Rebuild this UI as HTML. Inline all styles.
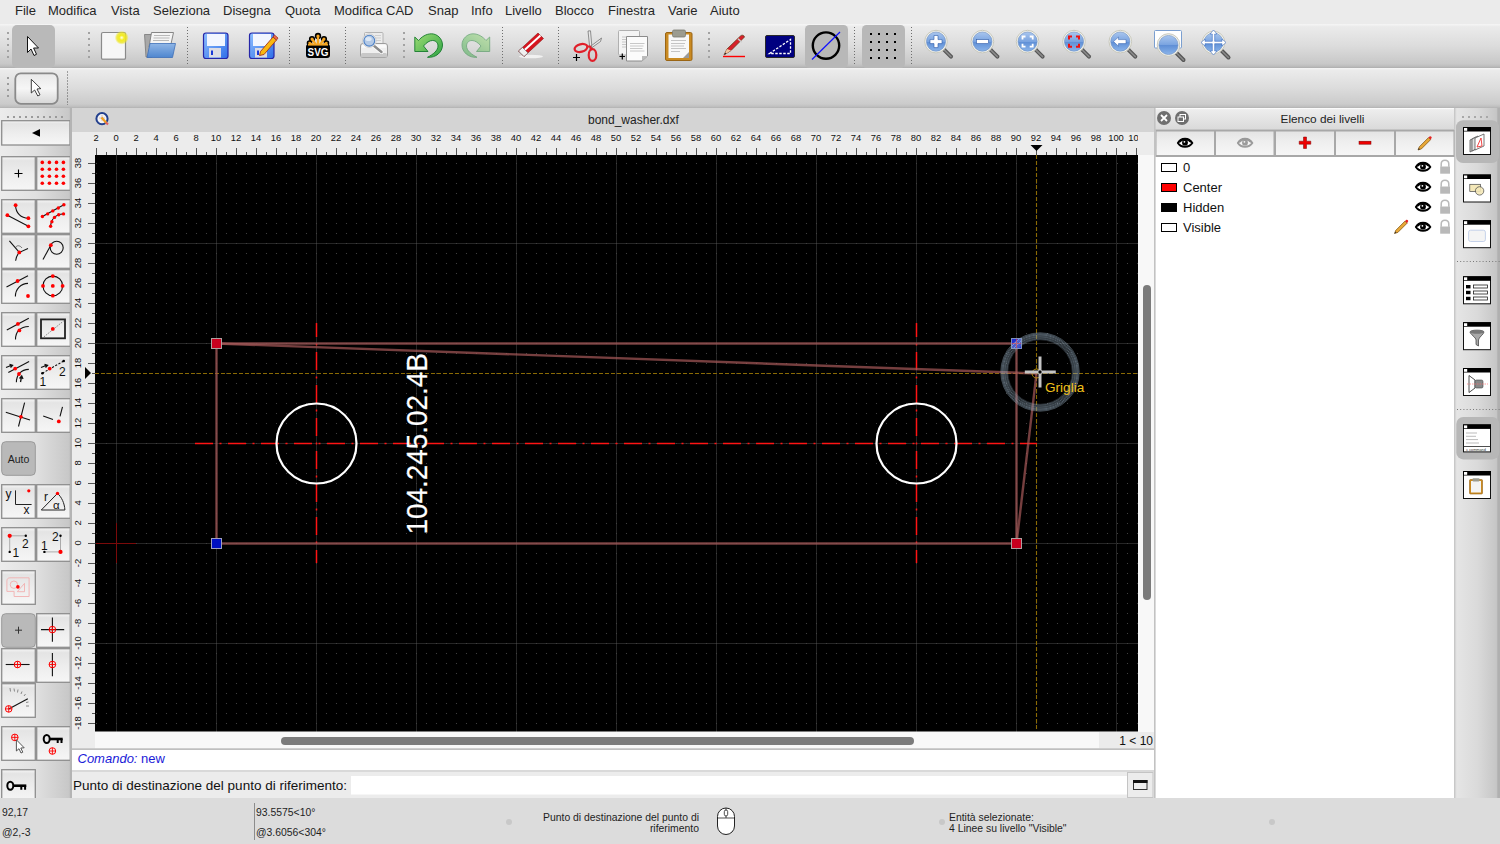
<!DOCTYPE html>
<html><head><meta charset="utf-8">
<style>
*{box-sizing:border-box;margin:0;padding:0}
html,body{width:1500px;height:844px;overflow:hidden;background:#ececec;font-family:"Liberation Sans",sans-serif;color:#1e1e1e;position:relative}
.a{position:absolute}
.menu{position:absolute;left:0;top:0;width:1500px;height:24px;background:#ebebeb;font-size:13px}
.menu span{position:absolute;top:3px;white-space:pre;color:#262626}
.tb1{position:absolute;left:0;top:24px;width:1500px;height:44px;background:linear-gradient(#f6f6f6,#ebebeb 6%,#dcdcdc 50%,#c8c8c8 90%,#bdbdbd 96%,#adadad)}
.tb2{position:absolute;left:0;top:68px;width:1500px;height:40px;background:linear-gradient(#f6f6f6,#ebebeb 6%,#dcdcdc 50%,#cbcbcb 90%,#c0c0c0 96%,#b2b2b2)}
.sepd{position:absolute;width:1px;border-left:1px dotted #6a6a6a}
.grip{position:absolute;width:2px}
.grip i{display:block;width:2px;height:2px;background:#9a9a9a;margin-bottom:4px}
.left{position:absolute;left:0;top:108px;width:72px;height:690px;background:linear-gradient(90deg,#ececec,#e0e0e0 50%,#c8c8c8 95%,#b8b8b8)}
.btn{position:absolute;width:35px;height:35px;border:1px solid #8e8e8e;background:linear-gradient(#f4f4f4,#ececec 40%,#e4e4e4);overflow:hidden}
.btn svg{position:absolute;left:0;top:0}
.mdi{position:absolute;left:72px;top:108px;width:1083px;height:690px;background:#ececec}
.mdititle{position:absolute;left:72px;top:108px;width:1083px;height:24px;background:#d4d4d4;font-size:11.5px;text-align:center;line-height:22px;color:#222}
.canvas{position:absolute;left:95px;top:155px;width:1043px;height:576px;background:#000}
.cmd{position:absolute;left:72px;top:748px;width:1083px;height:50px;background:#e8e8e8}
.status{position:absolute;left:0;top:798px;width:1500px;height:46px;background:#dcdcdc;font-size:10.4px;color:#1e1e1e}
.status span{position:absolute;white-space:pre}
.layers{position:absolute;left:1155px;top:108px;width:300px;height:690px;background:#fff}
.rdock{position:absolute;left:1455px;top:108px;width:45px;height:690px;background:linear-gradient(90deg,#e6e6e6,#dadada 50%,#c6c6c6 92%,#a8a8a8)}
svg text{font-family:"Liberation Sans",sans-serif}
</style></head><body>

<div class="menu">
<span style="left:15px">File</span>
<span style="left:48px">Modifica</span>
<span style="left:111px">Vista</span>
<span style="left:153px">Seleziona</span>
<span style="left:223px">Disegna</span>
<span style="left:285px">Quota</span>
<span style="left:334px">Modifica CAD</span>
<span style="left:428px">Snap</span>
<span style="left:471px">Info</span>
<span style="left:505px">Livello</span>
<span style="left:555px">Blocco</span>
<span style="left:608px">Finestra</span>
<span style="left:668px">Varie</span>
<span style="left:710px">Aiuto</span>
</div>

<div class="tb1"><svg class="a" style="left:0;top:0" width="1500" height="44" viewBox="0 24 1500 44">
<defs>
<linearGradient id="flp" x1="0" y1="0" x2="1" y2="1"><stop offset="0" stop-color="#8fc0ff"/><stop offset="1" stop-color="#2f6ee8"/></linearGradient>
<linearGradient id="lensg" x1="0" y1="0" x2="0" y2="1"><stop offset="0" stop-color="#a9c6ee"/><stop offset="0.5" stop-color="#79a3e0"/><stop offset="0.52" stop-color="#5f8fd6"/><stop offset="1" stop-color="#8ab4ea"/></linearGradient>
<linearGradient id="fold" x1="0" y1="0" x2="0" y2="1"><stop offset="0" stop-color="#8fb6e6"/><stop offset="1" stop-color="#4f86cf"/></linearGradient>
<linearGradient id="undo" x1="0" y1="0" x2="1" y2="1"><stop offset="0" stop-color="#9ddc74"/><stop offset="1" stop-color="#2ea344"/></linearGradient>
<radialGradient id="glow"><stop offset="0" stop-color="#fffff0"/><stop offset="0.35" stop-color="#f4ec20"/><stop offset="0.7" stop-color="#eee620" stop-opacity="0.8"/><stop offset="1" stop-color="#eee620" stop-opacity="0"/></radialGradient>
<g id="lens">
 <path d="M8,8 L15,15" stroke="#555" stroke-width="4" stroke-linecap="round"/>
 <path d="M8,8 L15,15" stroke="#8a8a8a" stroke-width="1.5" stroke-linecap="round"/>
 <circle cx="0" cy="0" r="11.3" fill="#f4f4ee" stroke="#c8c8bc" stroke-width="1"/>
 <circle cx="0" cy="0" r="9.6" fill="url(#lensg)" stroke="#6f8fbf" stroke-width="0.6"/>
</g>
<g id="gripv"><rect x="0" y="0" width="2" height="2"/><rect x="0" y="6" width="2" height="2"/><rect x="0" y="12" width="2" height="2"/><rect x="0" y="18" width="2" height="2"/><rect x="0" y="24" width="2" height="2"/></g>
</defs>
<!-- grips -->
<g fill="#a2a2a2">
<use href="#gripv" x="7" y="32"/><use href="#gripv" x="88" y="32"/><use href="#gripv" x="403" y="32"/><use href="#gripv" x="708" y="32"/>
</g>
<!-- dotted separators -->
<g stroke="#6e6e6e" stroke-width="1" stroke-dasharray="1,2">
<line x1="187.5" y1="27" x2="187.5" y2="66"/><line x1="289.5" y1="27" x2="289.5" y2="66"/><line x1="345.5" y1="27" x2="345.5" y2="66"/>
<line x1="502.5" y1="27" x2="502.5" y2="66"/><line x1="558.5" y1="27" x2="558.5" y2="66"/><line x1="854.5" y1="27" x2="854.5" y2="66"/><line x1="911.5" y1="27" x2="911.5" y2="66"/>
</g>
<!-- selected select button -->
<rect x="12" y="25" width="43" height="43" rx="5" fill="#b9b9b9"/>
<path d="M27.5,36.5 L27.5,52.5 L31,49 L34,55.5 L36.5,54.3 L33.6,48 L38.5,48 Z" fill="#fff" stroke="#111" stroke-width="1" stroke-linejoin="round"/>
<!-- new document -->
<rect x="101.5" y="32.5" width="24" height="27" rx="1.5" fill="#f6f6f6" stroke="#8a8a8a" stroke-width="1.2"/>
<rect x="102" y="58.5" width="23" height="1.5" fill="#9a9a9a"/>
<circle cx="121.7" cy="37.7" r="7" fill="url(#glow)"/>
<!-- open folder -->
<path d="M144.5,34.5 L152,34.5 L152,57 L146,57 Z" fill="#a8a8a8" stroke="#777" stroke-width="0.8"/>
<path d="M151.5,32.5 L173.5,32.5 L171,44 L149,47 Z" fill="#f4f4f4" stroke="#7a7a7a" stroke-width="0.9"/>
<path d="M154,35.5 L170,35.5 M153.5,38 L169.5,38 M153,40.5 L169,40.5" stroke="#b8b8b8" stroke-width="1.2"/>
<path d="M150,43.5 L175.5,43.5 L172.5,57.5 L147,57.5 Z" fill="url(#fold)" stroke="#3d6fb8" stroke-width="0.8"/>
<!-- save -->
<g id="floppy">
<rect x="203.5" y="33" width="24.5" height="25.5" rx="2.5" fill="url(#flp)" stroke="#2626a8" stroke-width="1.2"/>
<rect x="207" y="34" width="18" height="12" fill="#f2f6ff"/>
<rect x="209" y="48" width="12" height="9.5" fill="#dcdce4"/>
<rect x="211" y="50.5" width="2" height="4.5" fill="#1a3ad8"/>
</g>
<use href="#floppy" x="46"/>
<path d="M260.5,51.5 L273,37 L276.5,40 L264,54.5 L259.5,55.5 Z" fill="#f9b811" stroke="#a4341a" stroke-width="0.9" stroke-linejoin="round"/>
<path d="M273,37 L274.5,35 L278,38 L276.5,40 Z" fill="#ec6a50" stroke="#a4341a" stroke-width="0.8"/>
<!-- SVG -->
<g stroke="#000" stroke-width="1.6" fill="#f5a623">
<circle cx="318" cy="36" r="2.4"/><circle cx="312" cy="39" r="2.3"/><circle cx="324" cy="39" r="2.3"/><circle cx="309.5" cy="43" r="2"/><circle cx="326.5" cy="43" r="2"/>
</g>
<path d="M318,36 L318,45 M312,39 L316,45 M324,39 L320,45 M309.5,43 L314,45.5 M326.5,43 L322,45.5" stroke="#f5a623" stroke-width="2.4"/>
<rect x="306" y="44" width="24" height="14" rx="3" fill="#000"/>
<rect x="308" y="44" width="20" height="1.6" fill="#f5a623"/>
<text x="318" y="56" font-size="11" font-weight="bold" fill="#fff" text-anchor="middle" transform="translate(318,0) scale(0.9,1) translate(-318,0)">SVG</text>
<!-- print preview -->
<rect x="364.5" y="32.5" width="18.5" height="13" rx="1" fill="#ececec" stroke="#b4b4b4"/>
<path d="M375,35.5 L381,35.5 M375,38 L381,38 M375,40.5 L381,40.5" stroke="#cfcfcf" stroke-width="1"/>
<rect x="360.5" y="43.5" width="27" height="14" rx="2.5" fill="#efefef" stroke="#9c9c9c" stroke-width="1"/>
<rect x="362" y="44.8" width="24" height="3" fill="#fafafa"/>
<rect x="361" y="53" width="26" height="4.3" rx="1.5" fill="#c8c8c8"/>
<path d="M373,45 L381.5,52" stroke="#fff" stroke-width="4" stroke-linecap="round"/>
<path d="M373,45 L381.5,52" stroke="#8c8c8c" stroke-width="2.4" stroke-linecap="round"/>
<circle cx="369.3" cy="40.7" r="6.8" fill="#f6f6f6" stroke="#c4c4c4" stroke-width="0.8"/>
<circle cx="369.3" cy="40.7" r="5.4" fill="#b3c9e6" stroke="#4b7fc4" stroke-width="1.1"/>
<ellipse cx="368.5" cy="39" rx="3.2" ry="2" fill="#dce8f6"/>
<!-- undo / redo -->
<path d="M414.8,37 L414.8,51.5 L428,51.5 L423.5,46 C426.5,42.5 429.5,40.5 432.5,40.5 C436.5,40.5 438,43.5 438,46 C438,50.5 433,54.5 427.5,57.3 C436,58 442.5,52 442.5,45 C442.5,38.5 437,33.8 431.5,33.8 C426,33.8 421.5,37 418.5,40.5 Z" fill="url(#undo)" stroke="#167a2c" stroke-width="0.9" stroke-linejoin="round"/>
<g opacity="0.5"><path transform="translate(904.5,0) scale(-1,1)" d="M414.8,37 L414.8,51.5 L428,51.5 L423.5,46 C426.5,42.5 429.5,40.5 432.5,40.5 C436.5,40.5 438,43.5 438,46 C438,50.5 433,54.5 427.5,57.3 C436,58 442.5,52 442.5,45 C442.5,38.5 437,33.8 431.5,33.8 C426,33.8 421.5,37 418.5,40.5 Z" fill="url(#undo)" stroke="#167a2c" stroke-width="0.9" stroke-linejoin="round"/></g>
<!-- eraser -->
<ellipse cx="531" cy="56.5" rx="12" ry="1.8" fill="#f4f4f4" opacity="0.9"/>
<path d="M518.5,51 L538,33 L543.5,38.5 L524,56.5 Z" fill="#d8141e" stroke="#8a1010" stroke-width="0.6"/>
<path d="M521,53.3 L540.5,35.5" stroke="#fff" stroke-width="2"/>
<path d="M518.5,51 L522.5,47.5 L528,53 L524,56.5 Z" fill="#f0f0f0" stroke="#666" stroke-width="0.6"/>
<!-- scissors -->
<path d="M590,50 L588,31 L590.5,30.8 L592,48 Z" fill="#e8e8e8" stroke="#666" stroke-width="0.7"/>
<path d="M591,46 L601.5,38 L600.5,41.5 L592,47.5 Z" fill="#e8e8e8" stroke="#666" stroke-width="0.7"/>
<ellipse cx="581" cy="48" rx="6.5" ry="3.8" transform="rotate(-15 581 48)" fill="none" stroke="#e0202a" stroke-width="2.2"/>
<ellipse cx="592.5" cy="55" rx="3.8" ry="5.8" fill="none" stroke="#e0202a" stroke-width="2.2"/>
<path d="M586.5,46.5 L590,46.5 L592,50" stroke="#e0202a" stroke-width="2.2" fill="none"/>
<path d="M573,57.5 L580,57.5 M576.5,54 L576.5,61" stroke="#000" stroke-width="1.2"/>
<!-- copy -->
<rect x="618.5" y="30.5" width="21" height="24.5" rx="1" fill="#f4f4f4" stroke="#b0b0b0"/>
<path d="M626.5,36.5 L647.5,36.5 L647.5,56 L642,61 L626.5,61 Z" fill="#fbfbfb" stroke="#8c8c8c"/>
<path d="M642,61 L642,56 L647.5,56 Z" fill="#bbb"/>
<path d="M630,43.5 L644.5,43.5 M630,46 L643.5,46 M630,48.5 L642.5,48.5 M630,51 L644.5,51 M622,37 L626,37 M622,39.5 L626,39.5 M622,42 L626,42 M622,44.5 L626,44.5 M622,47 L626,47" stroke="#c8c8c8" stroke-width="1"/>
<path d="M619.5,56.5 L625,56.5 M622.3,53.5 L622.3,59.5" stroke="#000" stroke-width="1.2"/>
<!-- paste -->
<rect x="665.5" y="32.5" width="26.5" height="28" rx="1.5" fill="#c98a22" stroke="#9a6514"/>
<rect x="668.5" y="34.5" width="20.5" height="23.5" fill="#f8f8f8"/>
<path d="M671,40.5 L686,40.5 M671,43.5 L685,43.5 M671,46 L684,46 M671,48.5 L686,48.5 M671,51.5 L680,51.5" stroke="#c4c4c4"/>
<path d="M683,58 L689,58 L689,52 Z" fill="#9a9a9a"/>
<rect x="672.5" y="30" width="13" height="7" rx="1.5" fill="#9c9c90" stroke="#7a7a70" stroke-width="0.8"/>
<!-- pencil -->
<path d="M723,56.5 L745,56.5" stroke="#ff0000" stroke-width="1.4"/>
<path d="M724,55 L727,49 L740.5,36 C742,34.5 744,35.2 744.5,37 L731,50.5 Z" fill="#d8202a" stroke="#6a3a1a" stroke-width="0.8" stroke-linejoin="round"/>
<path d="M724,55 L727,49 L731,50.5 Z" fill="#f0c8a0"/>
<path d="M724,55 L725.2,52.5 L726.4,53.4 Z" fill="#222"/>
<path d="M738,38.7 L741.7,42.3" stroke="#ccc" stroke-width="1.5"/>
<!-- dim box -->
<rect x="765.5" y="35.5" width="29" height="22" rx="1.5" fill="#000080" stroke="#2a2a2a" stroke-width="1"/>
<path d="M769.5,53.5 L790.5,39.5 L790.5,53.5 Z" fill="none" stroke="#fff" stroke-width="1.3" stroke-dasharray="2.5,1.5"/>
<!-- selected circle-line -->
<rect x="805" y="25" width="43" height="43" rx="4.5" fill="#b8b8b8"/>
<circle cx="826" cy="45.6" r="13.2" fill="none" stroke="#000" stroke-width="2.4"/>
<path d="M812,59.5 L840,32" stroke="#1010ff" stroke-width="1.2"/>
<!-- selected grid -->
<rect x="862" y="25" width="43" height="43" rx="4.5" fill="#b8b8b8"/>
<g fill="#000">
<rect x="870" y="33" width="2" height="2"/><rect x="878" y="33" width="2" height="2"/><rect x="886" y="33" width="2" height="2"/><rect x="894" y="33" width="2" height="2"/>
<rect x="870" y="41" width="2" height="2"/><rect x="878" y="41" width="2" height="2"/><rect x="886" y="41" width="2" height="2"/><rect x="894" y="41" width="2" height="2"/>
<rect x="870" y="49" width="2" height="2"/><rect x="878" y="49" width="2" height="2"/><rect x="886" y="49" width="2" height="2"/><rect x="894" y="49" width="2" height="2"/>
<rect x="870" y="57" width="2" height="2"/><rect x="878" y="57" width="2" height="2"/><rect x="886" y="57" width="2" height="2"/><rect x="894" y="57" width="2" height="2"/>
</g>
<!-- zoom icons -->
<use href="#lens" x="936" y="41.6"/>
<path d="M934,35.5 L938,35.5 L938,39.6 L942,39.6 L942,43.6 L938,43.6 L938,47.6 L934,47.6 L934,43.6 L930,43.6 L930,39.6 L934,39.6 Z" fill="#fff" stroke="#2d5aa8" stroke-width="0.6"/>
<use href="#lens" x="982.4" y="41.6"/>
<rect x="976.5" y="39.6" width="12" height="4" fill="#fff" stroke="#2d5aa8" stroke-width="0.6"/>
<use href="#lens" x="1027.6" y="41.6"/>
<path d="M1022.5,39.5 L1022.5,36.5 L1025.5,36.5 M1029.7,36.5 L1032.7,36.5 L1032.7,39.5 M1032.7,43.7 L1032.7,46.7 L1029.7,46.7 M1025.5,46.7 L1022.5,46.7 L1022.5,43.7" stroke="#fff" stroke-width="1.8" fill="none"/>
<use href="#lens" x="1074" y="41.6"/>
<path d="M1069,39.5 L1069,36.5 L1072,36.5 M1076,36.5 L1079,36.5 L1079,39.5 M1079,43.7 L1079,46.7 L1076,46.7 M1072,46.7 L1069,46.7 L1069,43.7" stroke="#ee1010" stroke-width="2" fill="none"/>
<use href="#lens" x="1120.3" y="41.6"/>
<path d="M1113.5,41.6 L1118.5,37 L1118.5,39.6 L1126,39.6 L1126,43.6 L1118.5,43.6 L1118.5,46.2 Z" fill="#fff" stroke="#2d5aa8" stroke-width="0.5"/>
<rect x="1154.5" y="30.5" width="27" height="17.5" rx="1" fill="#fff" stroke="#7b9fd0" stroke-width="1"/>
<use href="#lens" x="1168.5" y="45"/>
<use href="#lens" x="1213.5" y="42.5"/>
<path d="M1213.5,30 L1217,34 L1214.7,34 L1214.7,41.3 L1222,41.3 L1222,39 L1226,42.5 L1222,46 L1222,43.7 L1214.7,43.7 L1214.7,51 L1217,51 L1213.5,55 L1210,51 L1212.3,51 L1212.3,43.7 L1205,43.7 L1205,46 L1201,42.5 L1205,39 L1205,41.3 L1212.3,41.3 L1212.3,34 L1210,34 Z" fill="#fff" stroke="#3b6cc0" stroke-width="0.6"/>
</svg>
</div>
<div class="tb2"><svg class="a" style="left:0;top:0" width="1500" height="40" viewBox="0 68 1500 40">
<defs><linearGradient id="b2g" x1="0" y1="0" x2="0" y2="1"><stop offset="0" stop-color="#e8e8e8"/><stop offset="0.5" stop-color="#f6f6f6"/><stop offset="1" stop-color="#d6d6d6"/></linearGradient></defs>
<g fill="#9c9c9c"><rect x="7" y="77" width="2" height="2"/><rect x="7" y="83" width="2" height="2"/><rect x="7" y="89" width="2" height="2"/><rect x="7" y="95" width="2" height="2"/></g>
<rect x="15.3" y="73.3" width="42.4" height="30.5" rx="5.5" fill="url(#b2g)" stroke="#8a8a8a" stroke-width="1.8"/>
<path d="M31.3,79.3 L31.3,93 L34.6,90 L37.8,96 L40,94.8 L37,89 L40.8,88.6 Z" fill="#fff" stroke="#2a2a2a" stroke-width="0.9" stroke-linejoin="round"/>
<line x1="67.5" y1="71.5" x2="67.5" y2="105" stroke="#555" stroke-width="1" stroke-dasharray="1,2"/>
</svg>
</div>

<div class="left"><svg class="a" style="left:0;top:0" width="72" height="690" viewBox="0 108 72 690"><defs>
<linearGradient id="lbg" x1="0" y1="0" x2="0" y2="1"><stop offset="0" stop-color="#f6f6f6"/><stop offset="0.12" stop-color="#e4e4e4"/><stop offset="0.55" stop-color="#eeeeee"/><stop offset="1" stop-color="#f6f6f6"/></linearGradient>
<g id="rc"><circle cx="0" cy="0" r="3.3" fill="none" stroke="#ff0000" stroke-width="1"/><path d="M-3.3,0 L3.3,0 M0,-3.3 L0,3.3" stroke="#ff0000" stroke-width="0.9"/></g>
<g id="key"><ellipse cx="0" cy="0" rx="3" ry="4" fill="none" stroke="#000" stroke-width="2"/><path d="M3,0 L16,0" stroke="#000" stroke-width="2.6"/><path d="M11,0 L11,4 M14.8,0 L14.8,4" stroke="#000" stroke-width="2"/></g>
</defs><rect x="70" y="108" width="2" height="690" fill="#b4b4b4"/><rect x="7" y="116" width="2" height="2" fill="#9a9a9a"/><rect x="13" y="116" width="2" height="2" fill="#9a9a9a"/><rect x="19" y="116" width="2" height="2" fill="#9a9a9a"/><rect x="25" y="116" width="2" height="2" fill="#9a9a9a"/><rect x="31" y="116" width="2" height="2" fill="#9a9a9a"/><rect x="37" y="116" width="2" height="2" fill="#9a9a9a"/><rect x="43" y="116" width="2" height="2" fill="#9a9a9a"/><rect x="49" y="116" width="2" height="2" fill="#9a9a9a"/><rect x="55" y="116" width="2" height="2" fill="#9a9a9a"/><rect x="61" y="116" width="2" height="2" fill="#9a9a9a"/><rect x="1.7" y="120.7" width="68.3" height="24.3" fill="url(#lbg)" stroke="#8e8e8e" stroke-width="1.3"/><path d="M32,132.9 L40,129 L40,136.8 Z" fill="#000"/><rect x="1.7" y="156.7" width="33.6" height="33.6" fill="url(#lbg)" stroke="#8e8e8e" stroke-width="1.3"/><rect x="36.7" y="156.7" width="33.6" height="33.6" fill="url(#lbg)" stroke="#8e8e8e" stroke-width="1.3"/><rect x="1.7" y="199.7" width="33.6" height="33.6" fill="url(#lbg)" stroke="#8e8e8e" stroke-width="1.3"/><rect x="36.7" y="199.7" width="33.6" height="33.6" fill="url(#lbg)" stroke="#8e8e8e" stroke-width="1.3"/><rect x="1.7" y="234.7" width="33.6" height="33.6" fill="url(#lbg)" stroke="#8e8e8e" stroke-width="1.3"/><rect x="36.7" y="234.7" width="33.6" height="33.6" fill="url(#lbg)" stroke="#8e8e8e" stroke-width="1.3"/><rect x="1.7" y="269.7" width="33.6" height="33.6" fill="url(#lbg)" stroke="#8e8e8e" stroke-width="1.3"/><rect x="36.7" y="269.7" width="33.6" height="33.6" fill="url(#lbg)" stroke="#8e8e8e" stroke-width="1.3"/><rect x="1.7" y="312.7" width="33.6" height="33.6" fill="url(#lbg)" stroke="#8e8e8e" stroke-width="1.3"/><rect x="36.7" y="312.7" width="33.6" height="33.6" fill="url(#lbg)" stroke="#8e8e8e" stroke-width="1.3"/><rect x="1.7" y="355.7" width="33.6" height="33.6" fill="url(#lbg)" stroke="#8e8e8e" stroke-width="1.3"/><rect x="36.7" y="355.7" width="33.6" height="33.6" fill="url(#lbg)" stroke="#8e8e8e" stroke-width="1.3"/><rect x="1.7" y="398.7" width="33.6" height="33.6" fill="url(#lbg)" stroke="#8e8e8e" stroke-width="1.3"/><rect x="36.7" y="398.7" width="33.6" height="33.6" fill="url(#lbg)" stroke="#8e8e8e" stroke-width="1.3"/><rect x="1.7" y="441.7" width="33.6" height="33.6" rx="4" fill="#b9b9b9" stroke="#9a9a9a" stroke-width="1"/><rect x="1.7" y="484.7" width="33.6" height="33.6" fill="url(#lbg)" stroke="#8e8e8e" stroke-width="1.3"/><rect x="36.7" y="484.7" width="33.6" height="33.6" fill="url(#lbg)" stroke="#8e8e8e" stroke-width="1.3"/><rect x="1.7" y="527.7" width="33.6" height="33.6" fill="url(#lbg)" stroke="#8e8e8e" stroke-width="1.3"/><rect x="36.7" y="527.7" width="33.6" height="33.6" fill="url(#lbg)" stroke="#8e8e8e" stroke-width="1.3"/><rect x="1.7" y="570.7" width="33.6" height="33.6" fill="url(#lbg)" stroke="#8e8e8e" stroke-width="1.3"/><rect x="1.7" y="613.7" width="33.6" height="33.6" rx="4" fill="#b9b9b9" stroke="#9a9a9a" stroke-width="1"/><rect x="36.7" y="613.7" width="33.6" height="33.6" fill="url(#lbg)" stroke="#8e8e8e" stroke-width="1.3"/><rect x="1.7" y="648.7" width="33.6" height="33.6" fill="url(#lbg)" stroke="#8e8e8e" stroke-width="1.3"/><rect x="36.7" y="648.7" width="33.6" height="33.6" fill="url(#lbg)" stroke="#8e8e8e" stroke-width="1.3"/><rect x="1.7" y="683.7" width="33.6" height="33.6" fill="url(#lbg)" stroke="#8e8e8e" stroke-width="1.3"/><rect x="1.7" y="726.7" width="33.6" height="33.6" fill="url(#lbg)" stroke="#8e8e8e" stroke-width="1.3"/><rect x="36.7" y="726.7" width="33.6" height="33.6" fill="url(#lbg)" stroke="#8e8e8e" stroke-width="1.3"/><rect x="1.7" y="769.7" width="33.6" height="33.6" fill="url(#lbg)" stroke="#8e8e8e" stroke-width="1.3"/><g transform="translate(1,156)"><path d="M13.5,17.5 L21.5,17.5 M17.5,13.5 L17.5,21.5" stroke="#000" stroke-width="1.1"/></g><g transform="translate(36,156)"><circle cx="6.3" cy="6.4" r="1.8" fill="#ff0000"/><circle cx="6.3" cy="13.2" r="1.8" fill="#ff0000"/><circle cx="6.3" cy="20.3" r="1.8" fill="#ff0000"/><circle cx="6.3" cy="27.2" r="1.8" fill="#ff0000"/><circle cx="13.4" cy="6.4" r="1.8" fill="#ff0000"/><circle cx="13.4" cy="13.2" r="1.8" fill="#ff0000"/><circle cx="13.4" cy="20.3" r="1.8" fill="#ff0000"/><circle cx="13.4" cy="27.2" r="1.8" fill="#ff0000"/><circle cx="20.5" cy="6.4" r="1.8" fill="#ff0000"/><circle cx="20.5" cy="13.2" r="1.8" fill="#ff0000"/><circle cx="20.5" cy="20.3" r="1.8" fill="#ff0000"/><circle cx="20.5" cy="27.2" r="1.8" fill="#ff0000"/><circle cx="27.4" cy="6.4" r="1.8" fill="#ff0000"/><circle cx="27.4" cy="13.2" r="1.8" fill="#ff0000"/><circle cx="27.4" cy="20.3" r="1.8" fill="#ff0000"/><circle cx="27.4" cy="27.2" r="1.8" fill="#ff0000"/></g><g transform="translate(1,199)"><path d="M6.4,16.2 L27.4,27.3" stroke="#111" stroke-width="1.1" fill="none"/><path d="M14.6,6.2 C14.6,14 20,19.2 27.4,19.2" stroke="#111" stroke-width="1.1" fill="none"/><circle cx="6.4" cy="16.2" r="1.9" fill="#ff0000"/><circle cx="27.4" cy="27.3" r="1.9" fill="#ff0000"/><circle cx="14.6" cy="6.2" r="1.9" fill="#ff0000"/><circle cx="27.4" cy="19.2" r="1.9" fill="#ff0000"/></g><g transform="translate(36,199)"><path d="M6.4,17.5 L27.9,5.8" stroke="#111" stroke-width="1.1" fill="none"/><path d="M14.6,27.3 C15,21 19,15.5 27.5,14.9" stroke="#111" stroke-width="1.1" fill="none"/><circle cx="6.4" cy="17.5" r="1.7" fill="#ff0000"/><circle cx="11.6" cy="14.9" r="1.7" fill="#ff0000"/><circle cx="16.8" cy="11.9" r="1.7" fill="#ff0000"/><circle cx="22.3" cy="9" r="1.7" fill="#ff0000"/><circle cx="27.9" cy="5.8" r="1.7" fill="#ff0000"/><circle cx="14.6" cy="27.3" r="1.7" fill="#ff0000"/><circle cx="15.9" cy="22.7" r="1.7" fill="#ff0000"/><circle cx="18.5" cy="18.4" r="1.7" fill="#ff0000"/><circle cx="22.7" cy="15.8" r="1.7" fill="#ff0000"/><circle cx="27.5" cy="14.9" r="1.7" fill="#ff0000"/></g><g transform="translate(1,234)"><path d="M8.4,6.9 L18.3,18.4 L27,14.5 M18.3,18.4 C16,21 15,23 14.6,26.8" stroke="#111" stroke-width="1.1" fill="none"/><path d="M14.5,14 C15,11 19,11 21,14" stroke="#333" stroke-width="0.6" fill="none"/><circle cx="18.3" cy="18.4" r="1.9" fill="#ff0000"/></g><g transform="translate(36,234)"><circle cx="20.7" cy="13.8" r="6.5" stroke="#111" stroke-width="1.1" fill="none"/><path d="M7,25.5 L14.8,11.2" stroke="#111" stroke-width="1.1" fill="none"/><circle cx="14.8" cy="11.2" r="1.9" fill="#ff0000"/></g><g transform="translate(1,269)"><path d="M5.5,17.9 L27,6.8" stroke="#111" stroke-width="1.1" fill="none"/><path d="M14.4,27.4 C14.4,20 20,14.4 27,14.4" stroke="#111" stroke-width="1.1" fill="none"/><circle cx="16.6" cy="12" r="1.9" fill="#ff0000"/><circle cx="27" cy="27" r="1.9" fill="#ff0000"/></g><g transform="translate(36,269)"><circle cx="16.8" cy="16.9" r="9.8" stroke="#111" stroke-width="1.1" fill="none"/><circle cx="16.8" cy="16.9" r="1.9" fill="#ff0000"/><circle cx="16.8" cy="7.1" r="1.9" fill="#ff0000"/><circle cx="16.8" cy="26.7" r="1.9" fill="#ff0000"/><circle cx="7" cy="16.9" r="1.9" fill="#ff0000"/><circle cx="26.6" cy="16.9" r="1.9" fill="#ff0000"/></g><g transform="translate(1,312)"><path d="M5.8,18 L27.8,6.3" stroke="#111" stroke-width="1.1" fill="none"/><path d="M14.5,27.5 C14.5,20 19,14.5 27.8,14.5" stroke="#111" stroke-width="1.1" fill="none"/><circle cx="16.9" cy="11.9" r="1.9" fill="#ff0000"/><circle cx="18.4" cy="18.4" r="1.9" fill="#ff0000"/></g><g transform="translate(36,312)"><rect x="5" y="7.4" width="24" height="18.9" stroke="#222" stroke-width="1.8" fill="none"/><path d="M8,24.8 L27.7,8.9" stroke="#555" stroke-width="0.7" stroke-dasharray="1.5,1.2"/><circle cx="16.8" cy="16.9" r="1.9" fill="#ff0000"/></g><g transform="translate(1,355)"><path d="M7.3,17.4 L28.1,6.4" stroke="#111" stroke-width="1.1" fill="none"/><path d="M15.4,27.3 C15.4,20 20,14.4 27.8,14.4" stroke="#111" stroke-width="1.1" fill="none"/><path d="M5,12.5 L10,10.5 M8.5,9.5 L11.5,10.3 L9.5,12.5" stroke="#111" stroke-width="1.3" fill="none"/><path d="M19.5,27 L20.5,22 M18.5,23.5 L20.7,21 L22,24" stroke="#111" stroke-width="1.3" fill="none"/><circle cx="14.2" cy="13.6" r="1.9" fill="#ff0000"/><circle cx="18" cy="19" r="1.9" fill="#ff0000"/></g><g transform="translate(36,355)"><path d="M6.4,18.2 L27.7,6" stroke="#111" stroke-width="1.1" stroke-dasharray="2.2,1.5"/><path d="M5,12.5 L10,10.5 M8.5,9.5 L11.5,10.3 L9.5,12.5" stroke="#111" stroke-width="1.3" fill="none"/><circle cx="27.7" cy="6" r="1.3" fill="#000"/><circle cx="6.4" cy="18.2" r="1.3" fill="#000"/><text x="3.5" y="30.5" font-size="12" fill="#111">1</text><text x="23" y="21" font-size="12" fill="#111">2</text><circle cx="13.7" cy="13.6" r="1.9" fill="#ff0000"/></g><g transform="translate(1,398)"><path d="M4.8,14.3 L29,21.9 M23.6,4.7 L17.5,28.5" stroke="#111" stroke-width="1.1" fill="none"/><circle cx="19.9" cy="18.8" r="1.9" fill="#ff0000"/></g><g transform="translate(36,398)"><path d="M7.2,18 L17,21.4 M26.5,8.8 L24,18.4" stroke="#111" stroke-width="1.1" fill="none"/><circle cx="22.8" cy="23.4" r="1.9" fill="#ff0000"/></g><g transform="translate(1,441)"><text x="17.5" y="21.5" font-size="10.5" fill="#222" text-anchor="middle">Auto</text></g><g transform="translate(1,484)"><path d="M14.5,6.4 L14.5,20.5 L30.6,20.5" stroke="#222" stroke-width="1" fill="none"/><text x="4.5" y="14" font-size="12" fill="#111">y</text><text x="22.5" y="30" font-size="12" fill="#111">x</text><circle cx="27.8" cy="6.8" r="1.6" fill="#ff0000"/></g><g transform="translate(36,484)"><path d="M5.3,26 L21.5,9.4 C25.5,13 28.5,19 28.9,26 Z" stroke="#222" stroke-width="1" fill="none"/><text x="8" y="17" font-size="12" fill="#111">r</text><text x="17" y="24.5" font-size="11.5" fill="#111">α</text><circle cx="21.5" cy="9.4" r="1.7" fill="#ff0000"/></g><g transform="translate(1,527)"><path d="M24.8,8.8 L8.7,8.8 L8.7,24.9" stroke="#999" stroke-width="0.8" fill="none"/><circle cx="24.8" cy="8.8" r="1.2" fill="#000"/><circle cx="8.7" cy="24.9" r="1.2" fill="#000"/><text x="11.5" y="30" font-size="12" fill="#111">1</text><text x="21" y="21" font-size="12" fill="#111">2</text><circle cx="8.7" cy="8.8" r="2.1" fill="#ff0000"/></g><g transform="translate(36,527)"><path d="M24.5,8.8 L24.5,24.9 L8.4,24.9" stroke="#999" stroke-width="0.8" fill="none"/><circle cx="24.5" cy="8.8" r="1.2" fill="#000"/><circle cx="8.4" cy="24.9" r="1.2" fill="#000"/><text x="5" y="22.5" font-size="12" fill="#111">1</text><text x="16" y="14" font-size="12" fill="#111">2</text><circle cx="24.5" cy="24.9" r="2.1" fill="#ff0000"/></g><g transform="translate(1,570)"><path d="M9,7.8 L28.1,7.8 L28.1,26.5 L13.1,26.5 L13.1,21.4 L5.9,21.4 L5.9,11 C5.9,9 7,7.8 9,7.8 Z" stroke="#f2b0b0" stroke-width="0.9" fill="none"/><circle cx="12.9" cy="14.7" r="3.7" stroke="#f2a8a8" stroke-width="0.8" fill="none"/><path d="M16.3,21.7 L23.5,13.4 L23.5,21.7 Z" stroke="#f2a8a8" stroke-width="0.8" fill="none"/><circle cx="16.9" cy="16.9" r="1.8" fill="#ff0000"/></g><g transform="translate(1,613)"><path d="M14,17.2 L21,17.2 M17.5,13.7 L17.5,20.7" stroke="#333" stroke-width="1"/></g><g transform="translate(36,613)"><path d="M5,16.6 L28.2,16.6 M16.4,4.6 L16.4,28.7" stroke="#111" stroke-width="1.1"/><use href="#rc" x="16.4" y="16.6"/></g><g transform="translate(1,648)"><path d="M4.7,16.5 L28.6,16.5" stroke="#111" stroke-width="1.1"/><use href="#rc" x="16.5" y="16.5"/></g><g transform="translate(36,648)"><path d="M16.4,5.1 L16.4,28.3" stroke="#111" stroke-width="1.1"/><use href="#rc" x="16.4" y="16.5"/></g><g transform="translate(1,683)"><path d="M7.7,25.9 L26.8,15.7" stroke="#111" stroke-width="1.1"/><g stroke="#888" stroke-width="1"><path d="M9,5 L9.5,8.5 M13,5.5 L13.5,8.5 M17,6.5 L16.5,9.5 M21,8.5 L20,11 M24.5,11 L23,13 M27.5,19 L25,19.5 M28,23 L25,23"/></g><use href="#rc" x="7.7" y="25.9"/></g><g transform="translate(1,726)"><use href="#rc" x="13.8" y="11.4"/><path d="M15.4,13.8 L15.4,25 L18,22.7 L20,27 L21.8,26.2 L19.8,22 L23.2,21.8 Z" fill="#fff" stroke="#444" stroke-width="0.9" stroke-linejoin="round"/></g><g transform="translate(36,726)"><use href="#key" x="10.7" y="13"/><use href="#rc" x="16.4" y="25"/></g><g transform="translate(1,769)"><use href="#key" x="9.3" y="16.7"/></g></svg></div>

<div class="mdi"></div>
<div class="mdititle"><span class="a" style="left:516px;top:1px;width:90px;text-align:center;font-size:12px">bond_washer.dxf</span></div>
<svg class="a" style="left:0;top:0" width="1500" height="844" viewBox="0 0 1500 844">
  <rect x="72" y="132" width="1083" height="23" fill="#ececec"/>
  <rect x="72" y="155" width="23" height="576" fill="#ececec"/>
  <rect x="70" y="108" width="2" height="690" fill="#b4b4b4"/>
  <g stroke="#555" stroke-width="1"><line x1="96.5" y1="148" x2="96.5" y2="155"/><line x1="106.5" y1="152" x2="106.5" y2="155"/><line x1="116.5" y1="148" x2="116.5" y2="155"/><line x1="126.5" y1="152" x2="126.5" y2="155"/><line x1="136.5" y1="148" x2="136.5" y2="155"/><line x1="146.5" y1="152" x2="146.5" y2="155"/><line x1="156.5" y1="148" x2="156.5" y2="155"/><line x1="166.5" y1="152" x2="166.5" y2="155"/><line x1="176.5" y1="148" x2="176.5" y2="155"/><line x1="186.5" y1="152" x2="186.5" y2="155"/><line x1="196.5" y1="148" x2="196.5" y2="155"/><line x1="206.5" y1="152" x2="206.5" y2="155"/><line x1="216.5" y1="148" x2="216.5" y2="155"/><line x1="226.5" y1="152" x2="226.5" y2="155"/><line x1="236.5" y1="148" x2="236.5" y2="155"/><line x1="246.5" y1="152" x2="246.5" y2="155"/><line x1="256.5" y1="148" x2="256.5" y2="155"/><line x1="266.5" y1="152" x2="266.5" y2="155"/><line x1="276.5" y1="148" x2="276.5" y2="155"/><line x1="286.5" y1="152" x2="286.5" y2="155"/><line x1="296.5" y1="148" x2="296.5" y2="155"/><line x1="306.5" y1="152" x2="306.5" y2="155"/><line x1="316.5" y1="148" x2="316.5" y2="155"/><line x1="326.5" y1="152" x2="326.5" y2="155"/><line x1="336.5" y1="148" x2="336.5" y2="155"/><line x1="346.5" y1="152" x2="346.5" y2="155"/><line x1="356.5" y1="148" x2="356.5" y2="155"/><line x1="366.5" y1="152" x2="366.5" y2="155"/><line x1="376.5" y1="148" x2="376.5" y2="155"/><line x1="386.5" y1="152" x2="386.5" y2="155"/><line x1="396.5" y1="148" x2="396.5" y2="155"/><line x1="406.5" y1="152" x2="406.5" y2="155"/><line x1="416.5" y1="148" x2="416.5" y2="155"/><line x1="426.5" y1="152" x2="426.5" y2="155"/><line x1="436.5" y1="148" x2="436.5" y2="155"/><line x1="446.5" y1="152" x2="446.5" y2="155"/><line x1="456.5" y1="148" x2="456.5" y2="155"/><line x1="466.5" y1="152" x2="466.5" y2="155"/><line x1="476.5" y1="148" x2="476.5" y2="155"/><line x1="486.5" y1="152" x2="486.5" y2="155"/><line x1="496.5" y1="148" x2="496.5" y2="155"/><line x1="506.5" y1="152" x2="506.5" y2="155"/><line x1="516.5" y1="148" x2="516.5" y2="155"/><line x1="526.5" y1="152" x2="526.5" y2="155"/><line x1="536.5" y1="148" x2="536.5" y2="155"/><line x1="546.5" y1="152" x2="546.5" y2="155"/><line x1="556.5" y1="148" x2="556.5" y2="155"/><line x1="566.5" y1="152" x2="566.5" y2="155"/><line x1="576.5" y1="148" x2="576.5" y2="155"/><line x1="586.5" y1="152" x2="586.5" y2="155"/><line x1="596.5" y1="148" x2="596.5" y2="155"/><line x1="606.5" y1="152" x2="606.5" y2="155"/><line x1="616.5" y1="148" x2="616.5" y2="155"/><line x1="626.5" y1="152" x2="626.5" y2="155"/><line x1="636.5" y1="148" x2="636.5" y2="155"/><line x1="646.5" y1="152" x2="646.5" y2="155"/><line x1="656.5" y1="148" x2="656.5" y2="155"/><line x1="666.5" y1="152" x2="666.5" y2="155"/><line x1="676.5" y1="148" x2="676.5" y2="155"/><line x1="686.5" y1="152" x2="686.5" y2="155"/><line x1="696.5" y1="148" x2="696.5" y2="155"/><line x1="706.5" y1="152" x2="706.5" y2="155"/><line x1="716.5" y1="148" x2="716.5" y2="155"/><line x1="726.5" y1="152" x2="726.5" y2="155"/><line x1="736.5" y1="148" x2="736.5" y2="155"/><line x1="746.5" y1="152" x2="746.5" y2="155"/><line x1="756.5" y1="148" x2="756.5" y2="155"/><line x1="766.5" y1="152" x2="766.5" y2="155"/><line x1="776.5" y1="148" x2="776.5" y2="155"/><line x1="786.5" y1="152" x2="786.5" y2="155"/><line x1="796.5" y1="148" x2="796.5" y2="155"/><line x1="806.5" y1="152" x2="806.5" y2="155"/><line x1="816.5" y1="148" x2="816.5" y2="155"/><line x1="826.5" y1="152" x2="826.5" y2="155"/><line x1="836.5" y1="148" x2="836.5" y2="155"/><line x1="846.5" y1="152" x2="846.5" y2="155"/><line x1="856.5" y1="148" x2="856.5" y2="155"/><line x1="866.5" y1="152" x2="866.5" y2="155"/><line x1="876.5" y1="148" x2="876.5" y2="155"/><line x1="886.5" y1="152" x2="886.5" y2="155"/><line x1="896.5" y1="148" x2="896.5" y2="155"/><line x1="906.5" y1="152" x2="906.5" y2="155"/><line x1="916.5" y1="148" x2="916.5" y2="155"/><line x1="926.5" y1="152" x2="926.5" y2="155"/><line x1="936.5" y1="148" x2="936.5" y2="155"/><line x1="946.5" y1="152" x2="946.5" y2="155"/><line x1="956.5" y1="148" x2="956.5" y2="155"/><line x1="966.5" y1="152" x2="966.5" y2="155"/><line x1="976.5" y1="148" x2="976.5" y2="155"/><line x1="986.5" y1="152" x2="986.5" y2="155"/><line x1="996.5" y1="148" x2="996.5" y2="155"/><line x1="1006.5" y1="152" x2="1006.5" y2="155"/><line x1="1016.5" y1="148" x2="1016.5" y2="155"/><line x1="1026.5" y1="152" x2="1026.5" y2="155"/><line x1="1036.5" y1="148" x2="1036.5" y2="155"/><line x1="1046.5" y1="152" x2="1046.5" y2="155"/><line x1="1056.5" y1="148" x2="1056.5" y2="155"/><line x1="1066.5" y1="152" x2="1066.5" y2="155"/><line x1="1076.5" y1="148" x2="1076.5" y2="155"/><line x1="1086.5" y1="152" x2="1086.5" y2="155"/><line x1="1096.5" y1="148" x2="1096.5" y2="155"/><line x1="1106.5" y1="152" x2="1106.5" y2="155"/><line x1="1116.5" y1="148" x2="1116.5" y2="155"/><line x1="1126.5" y1="152" x2="1126.5" y2="155"/><line x1="1136.5" y1="148" x2="1136.5" y2="155"/><line x1="88" y1="723.5" x2="95" y2="723.5"/><line x1="92" y1="713.5" x2="95" y2="713.5"/><line x1="88" y1="703.5" x2="95" y2="703.5"/><line x1="92" y1="693.5" x2="95" y2="693.5"/><line x1="88" y1="683.5" x2="95" y2="683.5"/><line x1="92" y1="673.5" x2="95" y2="673.5"/><line x1="88" y1="663.5" x2="95" y2="663.5"/><line x1="92" y1="653.5" x2="95" y2="653.5"/><line x1="88" y1="643.5" x2="95" y2="643.5"/><line x1="92" y1="633.5" x2="95" y2="633.5"/><line x1="88" y1="623.5" x2="95" y2="623.5"/><line x1="92" y1="613.5" x2="95" y2="613.5"/><line x1="88" y1="603.5" x2="95" y2="603.5"/><line x1="92" y1="593.5" x2="95" y2="593.5"/><line x1="88" y1="583.5" x2="95" y2="583.5"/><line x1="92" y1="573.5" x2="95" y2="573.5"/><line x1="88" y1="563.5" x2="95" y2="563.5"/><line x1="92" y1="553.5" x2="95" y2="553.5"/><line x1="88" y1="543.5" x2="95" y2="543.5"/><line x1="92" y1="533.5" x2="95" y2="533.5"/><line x1="88" y1="523.5" x2="95" y2="523.5"/><line x1="92" y1="513.5" x2="95" y2="513.5"/><line x1="88" y1="503.5" x2="95" y2="503.5"/><line x1="92" y1="493.5" x2="95" y2="493.5"/><line x1="88" y1="483.5" x2="95" y2="483.5"/><line x1="92" y1="473.5" x2="95" y2="473.5"/><line x1="88" y1="463.5" x2="95" y2="463.5"/><line x1="92" y1="453.5" x2="95" y2="453.5"/><line x1="88" y1="443.5" x2="95" y2="443.5"/><line x1="92" y1="433.5" x2="95" y2="433.5"/><line x1="88" y1="423.5" x2="95" y2="423.5"/><line x1="92" y1="413.5" x2="95" y2="413.5"/><line x1="88" y1="403.5" x2="95" y2="403.5"/><line x1="92" y1="393.5" x2="95" y2="393.5"/><line x1="88" y1="383.5" x2="95" y2="383.5"/><line x1="92" y1="373.5" x2="95" y2="373.5"/><line x1="88" y1="363.5" x2="95" y2="363.5"/><line x1="92" y1="353.5" x2="95" y2="353.5"/><line x1="88" y1="343.5" x2="95" y2="343.5"/><line x1="92" y1="333.5" x2="95" y2="333.5"/><line x1="88" y1="323.5" x2="95" y2="323.5"/><line x1="92" y1="313.5" x2="95" y2="313.5"/><line x1="88" y1="303.5" x2="95" y2="303.5"/><line x1="92" y1="293.5" x2="95" y2="293.5"/><line x1="88" y1="283.5" x2="95" y2="283.5"/><line x1="92" y1="273.5" x2="95" y2="273.5"/><line x1="88" y1="263.5" x2="95" y2="263.5"/><line x1="92" y1="253.5" x2="95" y2="253.5"/><line x1="88" y1="243.5" x2="95" y2="243.5"/><line x1="92" y1="233.5" x2="95" y2="233.5"/><line x1="88" y1="223.5" x2="95" y2="223.5"/><line x1="92" y1="213.5" x2="95" y2="213.5"/><line x1="88" y1="203.5" x2="95" y2="203.5"/><line x1="92" y1="193.5" x2="95" y2="193.5"/><line x1="88" y1="183.5" x2="95" y2="183.5"/><line x1="92" y1="173.5" x2="95" y2="173.5"/><line x1="88" y1="163.5" x2="95" y2="163.5"/></g>
  <defs><clipPath id="rhclip"><rect x="72" y="132" width="1066" height="23"/></clipPath></defs>
  <g font-size="9.4" fill="#111" text-anchor="middle" clip-path="url(#rhclip)"><text x="96" y="141">2</text><text x="116" y="141">0</text><text x="136" y="141">2</text><text x="156" y="141">4</text><text x="176" y="141">6</text><text x="196" y="141">8</text><text x="216" y="141">10</text><text x="236" y="141">12</text><text x="256" y="141">14</text><text x="276" y="141">16</text><text x="296" y="141">18</text><text x="316" y="141">20</text><text x="336" y="141">22</text><text x="356" y="141">24</text><text x="376" y="141">26</text><text x="396" y="141">28</text><text x="416" y="141">30</text><text x="436" y="141">32</text><text x="456" y="141">34</text><text x="476" y="141">36</text><text x="496" y="141">38</text><text x="516" y="141">40</text><text x="536" y="141">42</text><text x="556" y="141">44</text><text x="576" y="141">46</text><text x="596" y="141">48</text><text x="616" y="141">50</text><text x="636" y="141">52</text><text x="656" y="141">54</text><text x="676" y="141">56</text><text x="696" y="141">58</text><text x="716" y="141">60</text><text x="736" y="141">62</text><text x="756" y="141">64</text><text x="776" y="141">66</text><text x="796" y="141">68</text><text x="816" y="141">70</text><text x="836" y="141">72</text><text x="856" y="141">74</text><text x="876" y="141">76</text><text x="896" y="141">78</text><text x="916" y="141">80</text><text x="936" y="141">82</text><text x="956" y="141">84</text><text x="976" y="141">86</text><text x="996" y="141">88</text><text x="1016" y="141">90</text><text x="1036" y="141">92</text><text x="1056" y="141">94</text><text x="1076" y="141">96</text><text x="1096" y="141">98</text><text x="1116" y="141">100</text><text x="1136" y="141">102</text></g>
  <circle cx="102" cy="118.7" r="5.6" fill="#f4f4f4" stroke="#23408e" stroke-width="2"/>
  <path d="M99,118 L105,118 M102,115 L102,121" stroke="#c0a0a0" stroke-width="0.6"/>
  <path d="M101.5,117.5 L106.5,123" stroke="#f0a020" stroke-width="2.2"/>
  <path d="M106,122.5 L108,124.5" stroke="#e06060" stroke-width="2.2"/>
  <g font-size="9.4" fill="#111" text-anchor="middle"><text transform="translate(81,723) rotate(-90)" x="0" y="0">-18</text><text transform="translate(81,703) rotate(-90)" x="0" y="0">-16</text><text transform="translate(81,683) rotate(-90)" x="0" y="0">-14</text><text transform="translate(81,663) rotate(-90)" x="0" y="0">-12</text><text transform="translate(81,643) rotate(-90)" x="0" y="0">-10</text><text transform="translate(81,623) rotate(-90)" x="0" y="0">-8</text><text transform="translate(81,603) rotate(-90)" x="0" y="0">-6</text><text transform="translate(81,583) rotate(-90)" x="0" y="0">-4</text><text transform="translate(81,563) rotate(-90)" x="0" y="0">-2</text><text transform="translate(81,543) rotate(-90)" x="0" y="0">0</text><text transform="translate(81,523) rotate(-90)" x="0" y="0">2</text><text transform="translate(81,503) rotate(-90)" x="0" y="0">4</text><text transform="translate(81,483) rotate(-90)" x="0" y="0">6</text><text transform="translate(81,463) rotate(-90)" x="0" y="0">8</text><text transform="translate(81,443) rotate(-90)" x="0" y="0">10</text><text transform="translate(81,423) rotate(-90)" x="0" y="0">12</text><text transform="translate(81,403) rotate(-90)" x="0" y="0">14</text><text transform="translate(81,383) rotate(-90)" x="0" y="0">16</text><text transform="translate(81,363) rotate(-90)" x="0" y="0">18</text><text transform="translate(81,343) rotate(-90)" x="0" y="0">20</text><text transform="translate(81,323) rotate(-90)" x="0" y="0">22</text><text transform="translate(81,303) rotate(-90)" x="0" y="0">24</text><text transform="translate(81,283) rotate(-90)" x="0" y="0">26</text><text transform="translate(81,263) rotate(-90)" x="0" y="0">28</text><text transform="translate(81,243) rotate(-90)" x="0" y="0">30</text><text transform="translate(81,223) rotate(-90)" x="0" y="0">32</text><text transform="translate(81,203) rotate(-90)" x="0" y="0">34</text><text transform="translate(81,183) rotate(-90)" x="0" y="0">36</text><text transform="translate(81,163) rotate(-90)" x="0" y="0">38</text></g>
</svg>
<svg class="a" style="left:95px;top:155px" width="1043" height="577" viewBox="95 155 1043 577" shape-rendering="crispEdges"><defs><pattern id="dots" x="6" y="3" width="10" height="10" patternUnits="userSpaceOnUse"><rect x="0" y="0" width="1" height="1" fill="#404040"/></pattern></defs><rect x="95" y="155" width="1043" height="577" fill="#000"/><rect x="116" y="155" width="1" height="577" fill="#262626"/><rect x="216" y="155" width="1" height="577" fill="#262626"/><rect x="316" y="155" width="1" height="577" fill="#262626"/><rect x="416" y="155" width="1" height="577" fill="#262626"/><rect x="516" y="155" width="1" height="577" fill="#262626"/><rect x="616" y="155" width="1" height="577" fill="#262626"/><rect x="716" y="155" width="1" height="577" fill="#262626"/><rect x="816" y="155" width="1" height="577" fill="#262626"/><rect x="916" y="155" width="1" height="577" fill="#262626"/><rect x="1016" y="155" width="1" height="577" fill="#262626"/><rect x="1116" y="155" width="1" height="577" fill="#262626"/><rect x="95" y="643" width="1043" height="1" fill="#262626"/><rect x="95" y="543" width="1043" height="1" fill="#262626"/><rect x="95" y="443" width="1043" height="1" fill="#262626"/><rect x="95" y="343" width="1043" height="1" fill="#262626"/><rect x="95" y="243" width="1043" height="1" fill="#262626"/><defs><pattern id="dots2" x="7" y="3" width="10" height="10" patternUnits="userSpaceOnUse"><rect x="0" y="0" width="1" height="1" fill="#404040"/></pattern></defs><rect x="95" y="155" width="946" height="577" fill="url(#dots)"/><rect x="1041" y="155" width="97" height="577" fill="url(#dots2)"/></svg><svg class="a" style="left:95px;top:155px" width="1043" height="577" viewBox="95 155 1043 577"><g stroke="#7a0a0a" stroke-width="1"><line x1="96" y1="543.5" x2="136" y2="543.5"/><line x1="116.5" y1="523" x2="116.5" y2="563"/></g><g stroke="#8a6a04" stroke-width="1.1" stroke-dasharray="4,2"><line x1="95" y1="373.5" x2="1138" y2="373.5"/><line x1="1036.5" y1="155" x2="1036.5" y2="731"/></g><g stroke="#ff1414" stroke-width="1.5" stroke-dasharray="18,6.5,2,6.5"><line x1="195" y1="443.5" x2="1037" y2="443.5"/><line x1="316.5" y1="323" x2="316.5" y2="563" stroke-dashoffset="4"/><line x1="916.5" y1="323" x2="916.5" y2="563" stroke-dashoffset="4"/></g><g fill="none" stroke="#fff" stroke-width="2.2"><circle cx="316.5" cy="443.5" r="40"/><circle cx="916.5" cy="443.5" r="40"/></g><text transform="translate(427.3,534.5) rotate(-90) scale(0.945,1)" font-size="29.5" stroke="#fff" stroke-width="0.2" fill="#fff" font-family="Liberation Sans">104.245.02.4B</text><g stroke="#a85a5a" stroke-width="2.4" fill="none" stroke-opacity="0.7"><polyline points="216.5,343.5 1016.5,343.5 1016.5,543.5 216.5,543.5 216.5,343.5"/><line x1="216.5" y1="343.5" x2="1036.5" y2="373.5"/><line x1="1036.5" y1="373.5" x2="1016.5" y2="543.5"/></g><rect x="211.5" y="338.5" width="10" height="10" fill="#c8001e" stroke="#b0a0a0" stroke-width="1"/><rect x="1011.5" y="538.5" width="10" height="10" fill="#c8001e" stroke="#b0a0a0" stroke-width="1"/><rect x="211.5" y="538.5" width="10" height="10" fill="#0010c0" stroke="#a0a0c0" stroke-width="1"/><rect x="1011.5" y="338.5" width="10" height="10" fill="#2030d0" stroke="#8090c0" stroke-width="1"/><g stroke="#7080ff" stroke-width="1"><line x1="1012" y1="346" x2="1019" y2="339"/><line x1="1014" y1="348" x2="1021" y2="341"/></g><g stroke="#e03040" stroke-width="0.8"><line x1="1016.5" y1="339" x2="1016.5" y2="348"/><line x1="1012" y1="343.5" x2="1021" y2="343.5"/></g><g fill="none" stroke="#92a8ba"><circle cx="1040" cy="372" r="32.3" stroke-width="1" stroke-opacity="0.25"/><circle cx="1040" cy="372" r="33.2" stroke-width="1" stroke-opacity="0.5"/><circle cx="1040" cy="372" r="34.2" stroke-width="1" stroke-opacity="0.4"/><circle cx="1040" cy="372" r="35.2" stroke-width="1" stroke-opacity="0.55"/><circle cx="1040" cy="372" r="36.2" stroke-width="1" stroke-opacity="0.45"/><circle cx="1040" cy="372" r="37.2" stroke-width="1" stroke-opacity="0.6"/><circle cx="1040" cy="372" r="38.2" stroke-width="1" stroke-opacity="0.55"/><circle cx="1040" cy="372" r="39.2" stroke-width="1" stroke-opacity="0.45"/></g><circle cx="1036.5" cy="373.5" r="4.5" fill="none" stroke="#b08a10" stroke-width="1"/><g fill="#c4c4c4"><rect x="1038.5" y="356.5" width="3" height="31"/><rect x="1024.8" y="370.5" width="31" height="3"/></g><circle cx="1040" cy="372" r="2" fill="#000" stroke="#ddd" stroke-width="0.6"/><text x="1045" y="391.5" font-size="13.6" fill="#f2c21b" font-family="Liberation Sans">Griglia</text></svg>
<svg class="a" style="left:0;top:0" width="1500" height="844" viewBox="0 0 1500 844">
<!-- vscroll area -->
<rect x="1138" y="155" width="16" height="577" fill="#f8f8f8"/>
<rect x="1143" y="285" width="8" height="315" rx="4" fill="#7b7b7b"/>
<rect x="1154" y="108" width="1.5" height="690" fill="#c6c6c6"/>
<!-- hscroll area -->
<rect x="95" y="731.5" width="1059" height="17" fill="#f8f8f8"/>
<rect x="1099" y="732" width="55" height="16.5" fill="#ebebeb"/>
<rect x="281" y="737" width="633" height="8" rx="4" fill="#7b7b7b"/>
<text x="1153" y="745" font-size="12" text-anchor="end" fill="#111">1 &lt; 10</text>
<rect x="72" y="748.3" width="1082" height="1.7" fill="#bfbfbf"/>
<!-- markers -->
<path d="M1030.5,145 L1042.5,145 L1036.5,151 Z" fill="#000"/>
<path d="M85,367 L91,373 L85,379 Z" fill="#000"/>
<!-- command history -->
<rect x="72" y="750" width="1082" height="20.3" fill="#fff"/>
<rect x="72" y="770.3" width="1082" height="1.5" fill="#cfcfcf"/>
<rect x="72" y="771.8" width="1082" height="26.2" fill="#ececec"/>
<rect x="351" y="776" width="776" height="18.5" fill="#fff"/>
<rect x="1127.5" y="772.5" width="25.5" height="25" fill="#ececec" stroke="#c4c4c4" stroke-width="1"/>
<rect x="1133.5" y="780.5" width="13.5" height="9" fill="#eee" stroke="#333" stroke-width="1"/>
<rect x="1133" y="780" width="14.5" height="3" fill="#111"/>
<text x="77.5" y="762.5" font-size="13" fill="#1a1ad8"><tspan font-style="italic">Comando:</tspan> new</text>
<text x="73" y="789.8" font-size="13.5" fill="#111">Punto di destinazione del punto di riferimento:</text>
</svg>

<svg class="a" style="left:0;top:0" width="1500" height="844" viewBox="0 0 1500 844">
<defs>
<linearGradient id="ltg" x1="0" y1="0" x2="0" y2="1"><stop offset="0" stop-color="#efefef"/><stop offset="1" stop-color="#d9d9d9"/></linearGradient>
<linearGradient id="lbtn" x1="0" y1="0" x2="0" y2="1"><stop offset="0" stop-color="#e4e4e4"/><stop offset="0.4" stop-color="#eeeeee"/><stop offset="1" stop-color="#f6f6f6"/></linearGradient>
<g id="eye"><path d="M-7,0 C-4,-5.5 4,-5.5 7.2,0 C4,5 -4,5 -7,0 Z" fill="#fff" stroke="#000" stroke-width="2.2" stroke-linejoin="round"/><path d="M-5.5,-1.2 C-3,-4.5 3,-4.5 5.8,-1.2" fill="none" stroke="#000" stroke-width="2"/><circle cx="0" cy="-0.3" r="2.9" fill="#000"/><circle cx="-0.6" cy="-1.2" r="0.9" fill="#fff"/></g>
<g id="lock"><path d="M1.2,6.8 L1.2,4 C1.2,-1 8.8,-1 8.8,4 L8.8,6.8" fill="none" stroke="#b9b9b9" stroke-width="1.5"/><rect x="0.2" y="6.5" width="9.8" height="7.2" fill="#b9b9b9"/></g>
<g id="pen"><path d="M0,12 L1.3,8.8 L10.5,-0.4 L12.6,1.7 L3.4,10.9 Z" fill="#e8a838" stroke="#7a5010" stroke-width="0.7" stroke-linejoin="round"/><path d="M10.5,-0.4 L11.6,-1.5 C12.3,-2 13.2,-1.5 13.8,-0.5 L12.6,1.7 Z" fill="#e62222"/><path d="M0,12 L0.8,10 L2,11.2 Z" fill="#333"/></g>
</defs>
<rect x="1155" y="108" width="300" height="690" fill="#fff"/>
<rect x="1155" y="108" width="300" height="22" fill="url(#ltg)"/><rect x="1155" y="108" width="300" height="1.2" fill="#fafafa"/><rect x="1155" y="129" width="300" height="1" fill="#c4c4c4"/>
<rect x="1154" y="108" width="1.6" height="690" fill="#c2c2c2"/>
<rect x="1454" y="108" width="1.5" height="690" fill="#c8c8c8"/>
<circle cx="1164" cy="118" r="7" fill="#6f6f6f"/>
<path d="M1161,115 L1167,121 M1167,115 L1161,121" stroke="#fff" stroke-width="1.8"/>
<circle cx="1182" cy="118" r="7" fill="#6f6f6f"/>
<rect x="1180" y="114.5" width="5.5" height="4.5" fill="none" stroke="#fff" stroke-width="1"/>
<rect x="1178" y="117" width="5.5" height="4.5" fill="#6f6f6f" stroke="#fff" stroke-width="1"/>
<text x="1322.5" y="122.5" font-size="11.8" text-anchor="middle" fill="#222">Elenco dei livelli</text>
<!-- button row -->
<rect x="1155.5" y="130" width="299" height="27" fill="#a8a8a8"/>
<rect x="1156.5" y="131.5" width="57.5" height="23.5" fill="url(#lbtn)"/>
<rect x="1216" y="131.5" width="57.5" height="23.5" fill="url(#lbtn)"/>
<rect x="1276" y="131.5" width="58" height="23.5" fill="url(#lbtn)"/>
<rect x="1336" y="131.5" width="58" height="23.5" fill="url(#lbtn)"/>
<rect x="1396" y="131.5" width="57.5" height="23.5" fill="url(#lbtn)"/>
<use href="#eye" x="1185" y="143"/>
<g opacity="0.35"><use href="#eye" x="1245" y="143"/></g>
<path d="M1303.5,137 L1306.5,137 L1306.5,141.2 L1310.8,141.2 L1310.8,144.2 L1306.5,144.2 L1306.5,148.5 L1303.5,148.5 L1303.5,144.2 L1299.2,144.2 L1299.2,141.2 L1303.5,141.2 Z" fill="#ee0000" stroke="#7a0000" stroke-width="0.5"/>
<rect x="1359" y="141.2" width="12" height="3" fill="#ee0000" stroke="#7a0000" stroke-width="0.5"/>
<use href="#pen" x="1418" y="138"/>
<!-- list -->
<g font-size="13" fill="#111">
<rect x="1161.5" y="163.5" width="15" height="8" fill="#fff" stroke="#000" stroke-width="1"/>
<text x="1183" y="171.5">0</text>
<rect x="1161.5" y="183.5" width="15" height="8" fill="#ff0000" stroke="#000" stroke-width="1"/>
<text x="1183" y="191.5">Center</text>
<rect x="1161.5" y="203.5" width="15" height="8" fill="#000" stroke="#000" stroke-width="1"/>
<text x="1183" y="211.5">Hidden</text>
<rect x="1161.5" y="223.5" width="15" height="8" fill="#fff" stroke="#000" stroke-width="1"/>
<text x="1183" y="231.5">Visible</text>
</g>
<use href="#eye" x="1423" y="167"/><use href="#eye" x="1423" y="187"/><use href="#eye" x="1423" y="207"/><use href="#eye" x="1423" y="227"/>
<use href="#lock" x="1440" y="160"/><use href="#lock" x="1440" y="180"/><use href="#lock" x="1440" y="200"/><use href="#lock" x="1440" y="220"/>
<use href="#pen" x="1394.5" y="221.5"/>
</svg>

<div class="rdock"></div>
<svg class="a" style="left:1455px;top:108px" width="45" height="690" viewBox="1455 108 45 690">
<defs>
<g id="win"><rect x="0.5" y="0.5" width="27" height="27" fill="#fff" stroke="#111" stroke-width="1"/><rect x="0" y="0" width="28" height="4.5" fill="#000"/><rect x="1" y="1" width="3.2" height="2.8" fill="#fff"/></g>
</defs>
<rect x="1455" y="108" width="1.2" height="690" fill="#d6d6d6"/>
<rect x="1497.5" y="108" width="2.5" height="690" fill="#b0b0b0"/>
<g fill="#a8a8a8"><rect x="1462" y="116" width="2" height="2"/><rect x="1468" y="116" width="2" height="2"/><rect x="1474" y="116" width="2" height="2"/><rect x="1480" y="116" width="2" height="2"/><rect x="1486" y="116" width="2" height="2"/></g>
<rect x="1456" y="120.3" width="43" height="42.7" rx="7" fill="#b7b7b7"/>
<use href="#win" x="1463" y="127"/>
<path d="M1470,140 L1476,137 L1476,149 L1470,152 Z" fill="#c8c8c8" stroke="#555" stroke-width="0.8"/>
<path d="M1472,139 L1478,136 L1478,148 L1472,151 Z" fill="#e0e0e0" stroke="#555" stroke-width="0.8"/>
<path d="M1475,138 L1484,134 L1484,146 L1475,150 Z" fill="#fff" stroke="#555" stroke-width="0.8"/>
<path d="M1477,147 L1481,138 L1482,146 Z" fill="none" stroke="#ee3030" stroke-width="0.9"/>
<use href="#win" x="1463" y="174.5"/>
<rect x="1469.8" y="184.3" width="10.6" height="7.1" fill="#f4e8b8" stroke="#444" stroke-width="0.7"/>
<circle cx="1479.6" cy="190.9" r="4.2" fill="#f4e8b8" stroke="#444" stroke-width="0.7" fill-opacity="0.9"/>
<use href="#win" x="1463" y="220.2"/>
<rect x="1468.6" y="230.2" width="16.8" height="11.3" rx="2" fill="#f4f4f4" stroke="#b8c8e6" stroke-width="0.8"/>
<line x1="1457" y1="261.5" x2="1500" y2="261.5" stroke="#777" stroke-width="1" stroke-dasharray="1,2.2"/>
<use href="#win" x="1463" y="276.3"/>
<g fill="#000"><rect x="1466" y="285" width="4.5" height="3.4"/><rect x="1466" y="290.8" width="4.5" height="3.4"/><rect x="1466" y="296.8" width="4.5" height="3.4"/></g>
<g fill="none" stroke="#222" stroke-width="0.8"><rect x="1473.5" y="285" width="14" height="3"/><rect x="1473.5" y="291" width="14" height="3"/><rect x="1473.5" y="297" width="14" height="3"/></g>
<use href="#win" x="1463" y="322.2"/>
<path d="M1470,332 C1470,329.5 1484,329.5 1484,332 C1484,334 1478.5,337.5 1478.5,340 L1478.5,346 L1476,344.5 L1476,340 C1476,337.5 1470,334 1470,332 Z" fill="#a8a8a8" stroke="#333" stroke-width="0.7"/>
<ellipse cx="1477" cy="332" rx="7" ry="1.8" fill="#777"/>
<use href="#win" x="1463" y="368"/>
<path d="M1469,375.5 L1475,380 L1475,388 L1469,392.5 Z" fill="#fff" stroke="#222" stroke-width="0.8"/>
<rect x="1475" y="380" width="8" height="8" rx="1.5" fill="#888" stroke="#444" stroke-width="0.6"/>
<line x1="1467" y1="384" x2="1488" y2="384" stroke="#ff7070" stroke-width="0.7" stroke-dasharray="1.5,1"/>
<line x1="1457" y1="409.5" x2="1500" y2="409.5" stroke="#777" stroke-width="1" stroke-dasharray="1,2.2"/>
<rect x="1456.3" y="417" width="43" height="42.4" rx="7" fill="#b7b7b7"/>
<use href="#win" x="1463" y="424.4"/>
<g stroke="#aaa" stroke-width="0.8"><line x1="1466" y1="433" x2="1477" y2="433"/><line x1="1466" y1="436.3" x2="1476" y2="436.3"/><line x1="1466" y1="439.6" x2="1478" y2="439.6"/><line x1="1466" y1="443" x2="1479" y2="443"/></g>
<line x1="1463.5" y1="446.5" x2="1490.5" y2="446.5" stroke="#222" stroke-width="0.8"/>
<text x="1476" y="451" font-size="3.8" fill="#333" text-anchor="middle">c    command</text>
<use href="#win" x="1463" y="471"/>
<rect x="1469.5" y="479.5" width="13" height="14.5" rx="1" fill="#c98a22" stroke="#9a6514" stroke-width="0.6"/>
<rect x="1471" y="481" width="10" height="11.5" fill="#f4f4f4"/>
<rect x="1472.5" y="478.2" width="7" height="3.2" rx="0.8" fill="#9c9c90"/>
</svg>

<div class="status">
<span style="left:2px;top:9px">92,17</span>
<span style="left:2px;top:29px">@2,-3</span>
<div class="a" style="left:254px;top:5px;width:1px;height:37px;background:#8c8c8c"></div>
<span style="left:256px;top:9px">93.5575&lt;10°</span>
<span style="left:256px;top:29px">@3.6056&lt;304°</span>
<div class="a" style="left:506px;top:21px;width:6px;height:6px;border-radius:3px;background:#c8c8c8"></div>
<span style="left:440px;top:14px;width:259px;text-align:right">Punto di destinazione del punto di</span>
<span style="left:440px;top:25px;width:259px;text-align:right">riferimento</span>
<svg class="a" style="left:714px;top:9px" width="24" height="30" viewBox="0 0 24 30"><rect x="3.5" y="1" width="17" height="26.5" rx="8.5" fill="#fff" stroke="#222" stroke-width="1"/><path d="M3.5,11 L20.5,11 M12,1 L12,11" stroke="#222" stroke-width="0.8"/><rect x="10.3" y="3" width="3.4" height="6" rx="1.7" fill="#fff" stroke="#222" stroke-width="0.8"/></svg>
<div class="a" style="left:939px;top:21px;width:6px;height:6px;border-radius:3px;background:#c8c8c8"></div>
<span style="left:949px;top:14px">Entità selezionate:</span>
<span style="left:949px;top:25px">4 Linee su livello "Visible"</span>
<div class="a" style="left:1269px;top:21px;width:6px;height:6px;border-radius:3px;background:#c8c8c8"></div>
</div>

</body></html>
